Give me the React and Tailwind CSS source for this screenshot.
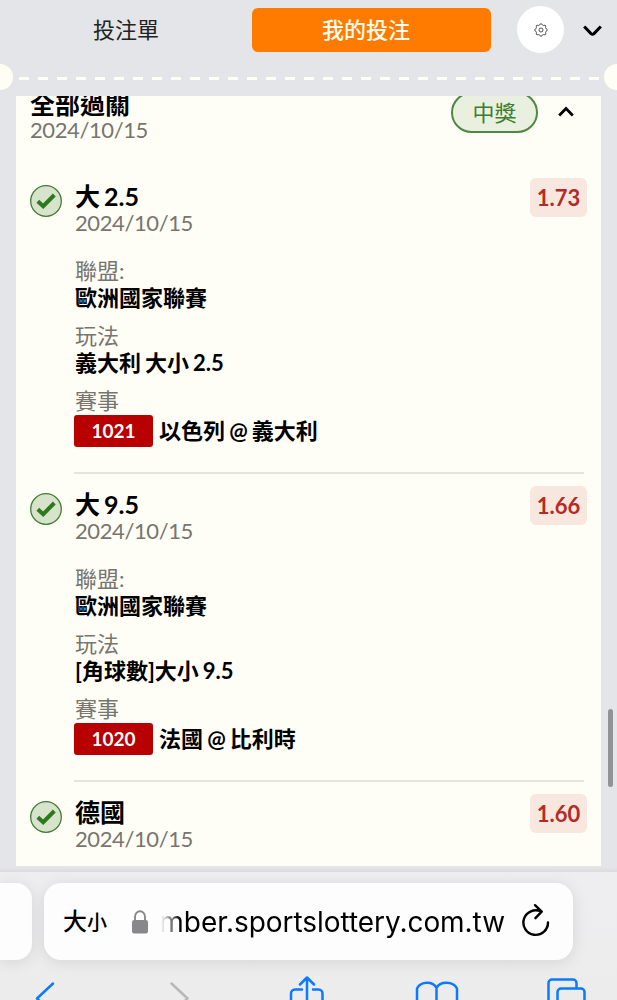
const legs = [
  {
    pick: '大 2.5',
    date: '2024/10/15',
    odds: '1.73',
    league: '歐洲國家聯賽',
    market: '義大利 大小 2.5',
    code: '1021',
    match: '以色列 @ 義大利',
  },
  {
    pick: '大 9.5',
    date: '2024/10/15',
    odds: '1.66',
    league: '歐洲國家聯賽',
    market: '[角球數]大小 9.5',
    code: '1020',
    match: '法國 @ 比利時',
  },
  { pick: '德國', date: '2024/10/15', odds: '1.60' },
];

function Gear() {
  return (
    <svg width="14" height="14" viewBox="0 0 14 14" fill="none" stroke="#444" strokeWidth="0.9">
      <path d="M5.8 1.9 L6.4 .8 H7.6 L8.2 1.9 L9.8 2.5 L11 2.1 L11.9 3 L11.5 4.2 L12.1 5.8 L13.2 6.4 V7.6 L12.1 8.2 L11.5 9.8 L11.9 11 L11 11.9 L9.8 11.5 L8.2 12.1 L7.6 13.2 H6.4 L5.8 12.1 L4.2 11.5 L3 11.9 L2.1 11 L2.5 9.8 L1.9 8.2 L.8 7.6 V6.4 L1.9 5.8 L2.5 4.2 L2.1 3 L3 2.1 L4.2 2.5 Z" strokeLinejoin="round" />
      <circle cx="7" cy="7" r="2" />
    </svg>
  );
}

function Header() {
  return (
    <header className="h-[96px] shrink-0 relative">
      <div className="flex items-center h-[59px]">
        <button className="w-[252px] h-[44px] text-[22px] leading-[42px] text-[#222]">投注單</button>
        <button className="w-[239px] h-[44px] rounded-[6px] bg-[#ff7b00] text-[22px] leading-[42px] font-medium text-[#fffdf0] pr-[11px]">
          我的投注
        </button>
        <button className="ml-[26px] w-[47px] h-[47px] rounded-full bg-white flex items-center justify-center">
          <Gear />
        </button>
        <svg className="ml-[19px] mt-[2px]" width="19" height="12" viewBox="0 0 19 12" fill="none" stroke="#000" strokeWidth="3">
          <path d="M1.2 1.5 L8 8.6 Q9.5 9.9 11 8.6 L17.8 1.5" />
        </svg>
      </div>

      {/* ticket perforation */}
      <svg className="mt-[18px]" width="617" height="3">
        <path d="M19 1.5 H600" stroke="#fffef6" strokeWidth="3" strokeDasharray="10 9" />
      </svg>
      <div className="absolute left-[-13px] top-[64px] w-[26px] h-[26px] rounded-full bg-[#fffef4]" />
      <div className="absolute right-[-13px] top-[64px] w-[26px] h-[26px] rounded-full bg-[#fffef4]" />
    </header>
  );
}

function WonIcon() {
  return (
    <svg className="mt-[3px]" width="32" height="32" viewBox="0 0 32 32" fill="none">
      <circle cx="16" cy="16" r="15.3" fill="#d8e3cc" stroke="#3f7d33" strokeWidth="1.3" />
      <path d="M7.8 16.3 L13.2 21.2 L24.3 10" stroke="#2b7a1e" strokeWidth="4" />
    </svg>
  );
}

function Leg({ leg }) {
  return (
    <div className="flex">
      <div className="w-[44px] shrink-0">
        <WonIcon />
      </div>
      <div className="flex-1">
        <div className="flex justify-between">
          <div className="pl-px">
            <div className="h-[30px] leading-[28px] text-[25px] font-bold [word-spacing:-2px]">{leg.pick}</div>
            <div className="h-[24px] leading-[22px] text-[22px] tracking-[-0.4px] text-[#77756f]">{leg.date}</div>
          </div>
          <div className="-mt-[4px] w-[57px] h-[39px] rounded-[6px] bg-[#f7e7df] text-[#b52a25] text-[22px] leading-[40px] font-bold text-center">
            {leg.odds}
          </div>
        </div>

        {leg.league && (
          <div className="mt-[22px] mr-[3px] h-[216px] border-b-2 border-[#e5e4de]">
            <div className="pl-px h-[26px] leading-[26px] text-[22px] text-[#77756f]">聯盟:</div>
            <div className="pl-px h-[28px] leading-[28px] text-[22px] font-bold">{leg.league}</div>
            <div className="pl-px mt-[11px] h-[26px] leading-[26px] text-[22px] text-[#77756f]">玩法</div>
            <div className="pl-px h-[28px] leading-[28px] text-[22px] font-bold [word-spacing:-1.3px]">{leg.market}</div>
            <div className="pl-px mt-[11px] h-[26px] leading-[26px] text-[22px] text-[#77756f]">賽事</div>
            <div className="mt-px flex items-center gap-[6px]">
              <span className="w-[79px] h-[32px] rounded-[3px] bg-[#b80000] text-white text-[19px] leading-[32px] font-bold text-center">
                {leg.code}
              </span>
              <span className="text-[22px] leading-[32px] font-bold [word-spacing:-1.2px]">{leg.match}</span>
            </div>
          </div>
        )}
      </div>
    </div>
  );
}

function BrowserBar() {
  return (
    <footer className="shrink-0 h-[128px] bg-linear-to-b from-[#eeeef1] to-[#ececec] font-[Inter,'Noto_Sans_CJK_TC',sans-serif]">
      <div className="flex pt-[11px]">
        <div className="w-[32px] h-[77px] rounded-r-[16px] bg-[#fdfdfd] shadow-[0_2px_16px_rgba(0,0,0,0.1)]" />
        <div className="ml-[12px] w-[529px] h-[77px] rounded-[17px] bg-[#fdfdfd] shadow-[0_2px_16px_rgba(0,0,0,0.1)] flex items-center">
          <span className="ml-[19px] w-[67px] whitespace-nowrap font-medium text-[24px]">
            大<span className="text-[20px]">小</span>
          </span>
          <svg className="ml-px" width="18" height="24" viewBox="0 0 18 24">
            <path d="M4 11 V6.8 a5 5.5 0 0 1 10 0 V11" fill="none" stroke="#88888a" strokeWidth="1.9" />
            <rect x="1" y="10" width="16" height="13.5" rx="2.2" fill="#88888a" />
          </svg>
          <div className="ml-[12px] w-[344px] h-[40px] overflow-hidden flex justify-end mask-[linear-gradient(to_right,transparent,black_20px)]">
            <span className="text-[28px] leading-[40px] tracking-[-0.05px]">mber.sportslottery.com.tw</span>
          </div>
          <svg className="ml-[16px] -mt-[3px]" width="30" height="34" viewBox="0 0 30 34" fill="none" stroke="#000" strokeWidth="2.4" strokeLinecap="round" strokeLinejoin="round">
            <path d="M20.2 8.6 A12.3 12.3 0 1 0 27 19.5" />
            <path d="M14 2.2 L20.7 8.6 L14.4 15.2" />
          </svg>
        </div>
      </div>

      <svg className="mt-[12px]" width="617" height="28" viewBox="0 0 617 28" fill="none" stroke="#0a7aff" strokeWidth="2.5" strokeLinecap="round" strokeLinejoin="round">
        <path d="M53 11.5 L37 26.5 L53 42" />
        <path d="M171.5 11.5 L187.5 26.5 L171.5 42" stroke="#b8b8ba" />
        {/* share */}
        <path d="M302 17.5 H295 a4 4 0 0 0 -4 4 V40 M313 17.5 H318.5 a4 4 0 0 1 4 4 V40" />
        <path d="M307 36 V6 M300 12.5 L307 5.5 L314 12.5" />
        {/* bookmarks */}
        <path d="M417 40 V16.5 C421 9 433 9 436.5 16 C440 9 453 9 457 16.5 V40 M436.5 16 V40" />
        {/* tabs */}
        <path d="M548.5 40 V11 a3.5 3.5 0 0 1 3.5 -3.5 H573 a3.5 3.5 0 0 1 3.5 3.5 V16" />
        <path d="M557.5 40 V20 a3.5 3.5 0 0 1 3.5 -3.5 H581 a3.5 3.5 0 0 1 3.5 3.5 V40" />
      </svg>
    </footer>
  );
}

export default function App() {
  return (
    <div className="relative w-[617px] h-[1000px] overflow-hidden flex flex-col bg-[#e4e5e8] text-black font-[Lato,'Noto_Sans_CJK_TC',sans-serif]">
      <Header />

      <main className="mx-[16px] w-[585px] h-[770px] shrink-0 overflow-hidden bg-[#fffef6] px-[14px]">
        <div className="-mt-[6px] h-[92px] flex">
          <div className="flex-1">
            <div className="h-[29px] leading-[29px] text-[25px] font-bold">全部過關</div>
            <div className="h-[24px] leading-[22px] text-[22px] tracking-[-0.4px] text-[#77756f]">2024/10/15</div>
          </div>
          <div className="mt-[2px] w-[87px] h-[41px] rounded-full border-2 border-[#4f8745] bg-[#eaf0df] text-[#3f7d33] text-[22px] leading-[38px] text-center">
            中獎
          </div>
          <svg className="ml-[20px] mr-[13px] mt-[16px]" width="16" height="11" viewBox="0 0 16 11" fill="none" stroke="#000" strokeWidth="2.8">
            <path d="M1.2 9.5 L8 2.5 L14.8 9.5" />
          </svg>
        </div>

        <div className="flex flex-col gap-[16px]">
          {legs.map((leg, i) => (
            <Leg key={i} leg={leg} />
          ))}
        </div>
      </main>

      <div className="h-[6px] shrink-0 bg-linear-to-b from-[#e7e7ea] to-[#dcdcdf]" />
      <BrowserBar />

      {/* scroll thumb */}
      <div className="absolute right-[4px] top-[709px] w-[5px] h-[78px] rounded-full bg-[#919296]" />
    </div>
  );
}
